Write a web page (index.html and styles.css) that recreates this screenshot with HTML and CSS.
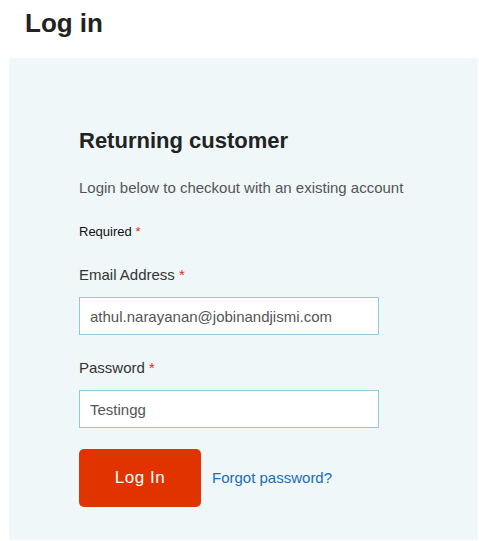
FILE: index.html
```html
<!DOCTYPE html>
<html lang="en">
<head>
<meta charset="utf-8">
<title>Log in</title>
<link rel="stylesheet" href="styles.css">
</head>
<body>
<h1 class="page-title">Log in</h1>
<section class="panel">
  <h2 class="panel-title">Returning customer</h2>
  <p class="intro">Login below to checkout with an existing account</p>
  <p class="required-note">Required <span class="star">*</span></p>
  <form class="login-form">
    <div class="field">
      <label class="label" for="email">Email Address <span class="star">*</span></label>
      <input class="input" id="email" type="text" value="athul.narayanan@jobinandjismi.com">
    </div>
    <div class="field">
      <label class="label" for="pass">Password <span class="star">*</span></label>
      <input class="input" id="pass" type="text" value="Testingg">
    </div>
    <div class="actions">
      <button class="btn" type="button">Log In</button>
      <a class="forgot" href="#">Forgot password?</a>
    </div>
  </form>
</section>
</body>
</html>
```

FILE: styles.css
```css
* { box-sizing: border-box; }
html, body {
  margin: 0;
  padding: 0;
  background: #ffffff;
  font-family: "Liberation Sans", Arial, sans-serif;
}
.page-title {
  margin: 0;
  padding: 8px 0 0 25px;
  font-size: 26px;
  line-height: 30px;
  font-weight: 700;
  color: #222222;
}
.panel {
  margin: 20px 1px 0 9px;
  padding: 70px 20px 33px 70px;
  background: #eff7f9;
}
.panel-title {
  margin: 0;
  font-size: 22px;
  line-height: 26px;
  font-weight: 700;
  color: #222222;
}
.intro {
  margin: 24px 0 0;
  font-size: 15px;
  line-height: 20px;
  color: #555555;
}
.required-note {
  margin: 25px 0 0;
  font-size: 13px;
  line-height: 18px;
  color: #111111;
}
.star {
  color: #e02b27;
}
.login-form {
  margin-top: 24px;
}
.field + .field {
  margin-top: 23px;
}
.label {
  display: block;
  font-size: 15px;
  line-height: 20px;
  color: #333333;
  margin-bottom: 12px;
}
.input {
  display: block;
  width: 300px;
  height: 38px;
  margin: 0;
  padding: 0 10px;
  border: 1px solid #8ecbe0;
  border-radius: 0;
  background: #ffffff;
  font-family: "Liberation Sans", Arial, sans-serif;
  font-size: 15px;
  color: #555555;
  outline: none;
}
.actions {
  display: flex;
  align-items: center;
  gap: 11px;
  margin-top: 21px;
}
.btn {
  width: 122px;
  height: 58px;
  border: 0;
  border-radius: 5px;
  background: #e03300;
  color: #ffffff;
  font-family: "Liberation Sans", Arial, sans-serif;
  font-size: 17px;
  letter-spacing: 0.5px;
  padding: 0;
  cursor: pointer;
}
.forgot {
  font-size: 15px;
  line-height: 20px;
  color: #1a6db5;
  text-decoration: none;
}
```
